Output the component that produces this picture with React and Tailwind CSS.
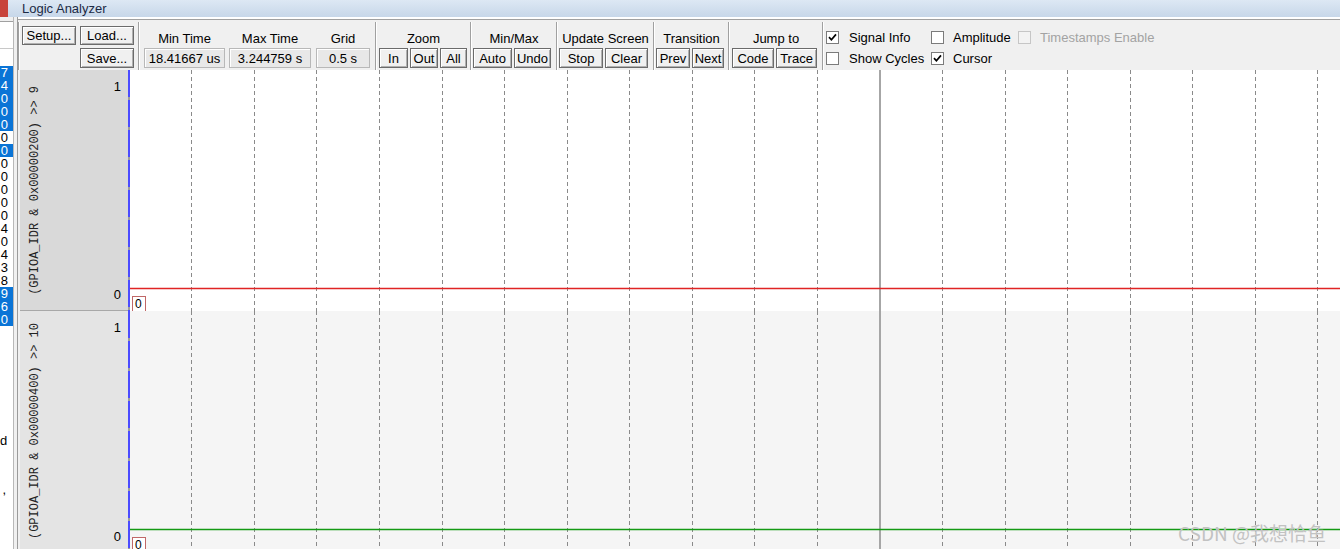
import React from "react";

const LIST = [
  ["7", 1], ["4", 1], ["0", 1], ["0", 1], ["0", 1], ["0", 0], ["0", 1],
  ["0", 0], ["0", 0], ["0", 0], ["0", 0], ["0", 0], ["4", 0], ["0", 0],
  ["4", 0], ["3", 0], ["8", 0], ["9", 1], ["6", 1], ["0", 1],
];

const GRID = Array.from({ length: 19 }, (_, i) => i + 1)
  .filter((k) => k !== 12)
  .map((k) => Math.round(128.8 + 62.55 * k - 130) + 0.5);

function Btn({ w, h = "h-[20px]", children }) {
  return (
    <div
      className={`${w} ${h} flex items-center justify-center border border-[#6b6b6b] bg-[#f0f0f0] shadow-[inset_1px_1px_0_#ffffff,inset_-1px_-1px_0_#b0b0b0] text-[13px] leading-none text-black`}
    >
      {children}
    </div>
  );
}

function ValueCol({ w, ml, title, value }) {
  return (
    <div className={`${w} ${ml} flex flex-col pt-[10px]`}>
      <div className="h-[18px] leading-[18px] text-center text-[13px]">{title}</div>
      <div className="h-[20px] flex items-center justify-center border border-[#b8b8b8] bg-[#e8e8e8] shadow-[inset_1px_1px_0_#ffffff] text-[13px] leading-none">
        {value}
      </div>
    </div>
  );
}

function Group({ w, title, pad, children }) {
  return (
    <div className={`${w} flex flex-col pt-[10px]`}>
      <div className="h-[18px] leading-[18px] text-center text-[13px]">{title}</div>
      <div className={`flex gap-[2px] ${pad}`}>{children}</div>
    </div>
  );
}

const Sep = () => (
  <div className="w-[2px] mt-[2px] h-[48px] border-l border-[#a0a0a0] bg-white" />
);

function Check({ checked, disabled }) {
  return (
    <div
      className={`w-[13px] h-[13px] border flex items-center justify-center ${
        disabled ? "border-[#c6c6c6] bg-[#f3f3f3]" : "border-[#7b7b7b] bg-white"
      }`}
    >
      {checked && (
        <svg width="9" height="9" viewBox="0 0 9 9">
          <path d="M1 4.2 L3.4 6.8 L8 1.4" stroke="#000" strokeWidth="1.7" fill="none" />
        </svg>
      )}
    </div>
  );
}

function SignalRow({ label, panelBg, graphBg, color, border }) {
  return (
    <div className="flex h-[241px] shrink-0">
      <div className={`w-[108px] flex ${panelBg} ${border}`}>
        <div className="w-[30px] flex items-center justify-center">
          <span className="[writing-mode:vertical-rl] rotate-180 whitespace-nowrap font-['Liberation_Mono',monospace] text-[12px] text-[#222]">
            {label}
          </span>
        </div>
        <div className="flex-1 flex flex-col items-end justify-between pt-[7px] pb-[6px] pr-[7px] text-[13px]">
          <span>1</span>
          <span>0</span>
        </div>
      </div>
      <div className="w-[2px] bg-[repeating-linear-gradient(to_bottom,#4b4bff_0px,#4b4bff_27px,#9c9c9c_27px,#9c9c9c_30px)]" />
      <div className={`flex-1 relative ${graphBg}`}>
        <svg className="absolute inset-0" width="1210" height="241">
          {GRID.map((x) => (
            <line key={x} x1={x} x2={x} y1="0" y2="241" stroke="#8a8a8a" strokeWidth="1" strokeDasharray="4 3" />
          ))}
          <line x1="750" x2="750" y1="0" y2="241" stroke="#a6a6a6" strokeWidth="2" />
          <line x1="0" x2="1210" y1="218.5" y2="218.5" stroke={color} strokeWidth="1.4" />
        </svg>
        <div className="absolute left-[2px] top-[226px] w-[14px] h-[16px] border border-[#c06868] bg-white text-[12px] leading-[14px] pl-[2px]">
          0
        </div>
      </div>
    </div>
  );
}

export default function App() {
  return (
    <div className="relative w-[1340px] h-[549px] overflow-hidden bg-white font-['Liberation_Sans',Arial,sans-serif] text-black">
      {/* title bar */}
      <div className="flex h-[17px]">
        <div className="w-[8px] bg-[#c8443b]" />
        <div className="flex-1 bg-linear-to-b from-[#dde8f4] to-[#c7d7e9] pl-[14px] text-[13px] leading-[17px] text-[#1b2a44]">
          Logic Analyzer
        </div>
      </div>

      <div className="flex h-[532px] overflow-hidden">
        {/* left window strip */}
        <div className="flex shrink-0">
          <div className="w-[13px] flex flex-col bg-white overflow-hidden">
            <div className="h-[4px] shrink-0 bg-[#f0f0f0]" />
            <div className="h-[1px] shrink-0 bg-[#a0a0a0]" />
            <div className="h-[26px] shrink-0" />
            <div className="h-[1px] shrink-0 bg-[#c8c8c8]" />
            <div className="h-[17px] shrink-0" />
            {LIST.map(([t, blue], i) => (
              <div
                key={i}
                className={`h-[13px] shrink-0 text-[13px] leading-[13px] text-right pr-[5px] ${
                  blue ? "bg-[#0a74d6] text-white" : "text-black"
                }`}
              >
                {t}
              </div>
            ))}
            <div className="h-[108px] shrink-0" />
            <div className="h-[13px] shrink-0 text-[13px] leading-[13px] text-right pr-[6px]">d</div>
            <div className="h-[36px] shrink-0" />
            <div className="h-[13px] shrink-0 text-[13px] leading-[13px] text-right pr-[7px]">,</div>
          </div>
          <div className="w-[1px] bg-[#b8b8b8]" />
          <div className="w-[3px] bg-[#f0f0f0]" />
          <div className="w-[1px] bg-[#9a9a9a]" />
        </div>

        {/* logic analyzer window */}
        <div className="flex-1 flex flex-col overflow-hidden">
          <div className="h-[2px] shrink-0 bg-white" />
          <div className="h-[1px] shrink-0 bg-[#a0a0a0]" />

          {/* toolbar */}
          <div className="flex h-[50px] shrink-0 bg-[#f0f0f0]">
            <Sep />
            <div className="w-[118px] flex flex-col pt-[6px] pl-[2px] gap-[3px]">
              <div className="flex gap-[4px]">
                <Btn w="w-[54px]" h="h-[19px]">Setup...</Btn>
                <Btn w="w-[54px]" h="h-[19px]">Load...</Btn>
              </div>
              <div className="flex pl-[58px]">
                <Btn w="w-[54px]">Save...</Btn>
              </div>
            </div>
            <Sep />
            <div className="w-[235px] flex">
              <ValueCol w="w-[81px]" ml="ml-[4px]" title="Min Time" value="18.41667 us" />
              <ValueCol w="w-[82px]" ml="ml-[4px]" title="Max Time" value="3.244759 s" />
              <ValueCol w="w-[54px]" ml="ml-[5px]" title="Grid" value="0.5 s" />
            </div>
            <Sep />
            <Group w="w-[93px]" title="Zoom" pad="pl-[2px]">
              <Btn w="w-[29px]">In</Btn>
              <Btn w="w-[28px]">Out</Btn>
              <Btn w="w-[27px]">All</Btn>
            </Group>
            <Sep />
            <Group w="w-[84px]" title="Min/Max" pad="pl-[1px]">
              <Btn w="w-[39px]">Auto</Btn>
              <Btn w="w-[37px]">Undo</Btn>
            </Group>
            <Sep />
            <Group w="w-[95px]" title="Update Screen" pad="pl-[1px]">
              <Btn w="w-[44px]">Stop</Btn>
              <Btn w="w-[43px]">Clear</Btn>
            </Group>
            <Sep />
            <Group w="w-[73px]" title="Transition" pad="pl-[1px]">
              <Btn w="w-[34px]">Prev</Btn>
              <Btn w="w-[32px]">Next</Btn>
            </Group>
            <Sep />
            <Group w="w-[92px]" title="Jump to" pad="pl-[2px]">
              <Btn w="w-[42px]">Code</Btn>
              <Btn w="w-[41px]">Trace</Btn>
            </Group>
            <Sep />
            <div className="flex-1 pt-[11px] pl-[2px] text-[13px] leading-none">
              <div className="grid grid-cols-[105px_87px_auto] gap-y-[8px]">
                <div className="flex items-center gap-[10px]">
                  <Check checked />
                  <span>Signal Info</span>
                </div>
                <div className="flex items-center gap-[9px]">
                  <Check />
                  <span>Amplitude</span>
                </div>
                <div className="flex items-center gap-[9px]">
                  <Check disabled />
                  <span className="text-[#a3a3a3]">Timestamps Enable</span>
                </div>
                <div className="flex items-center gap-[10px]">
                  <Check />
                  <span>Show Cycles</span>
                </div>
                <div className="flex items-center gap-[9px]">
                  <Check checked />
                  <span>Cursor</span>
                </div>
              </div>
            </div>
          </div>

          {/* waveform area */}
          <div className="flex-1 flex flex-col pl-[2px] bg-[#f0f0f0] overflow-hidden">
            <SignalRow
              label="(GPIOA_IDR & 0x00000200) >> 9"
              panelBg="bg-[#d9d9d9]"
              graphBg="bg-white"
              color="#e02424"
              border="border-b border-[#a8a8a8]"
            />
            <SignalRow
              label="(GPIOA_IDR & 0x00000400) >> 10"
              panelBg="bg-[#e4e4e4]"
              graphBg="bg-[#f5f5f5]"
              color="#149a14"
              border=""
            />
          </div>
        </div>
      </div>

      <div className="absolute right-[14px] bottom-[7px] font-['Noto_Sans_CJK_SC','Noto_Sans',sans-serif] text-[19px] leading-none text-[#c2c2c2]">
        CSDN @我想恰鱼
      </div>
    </div>
  );
}
